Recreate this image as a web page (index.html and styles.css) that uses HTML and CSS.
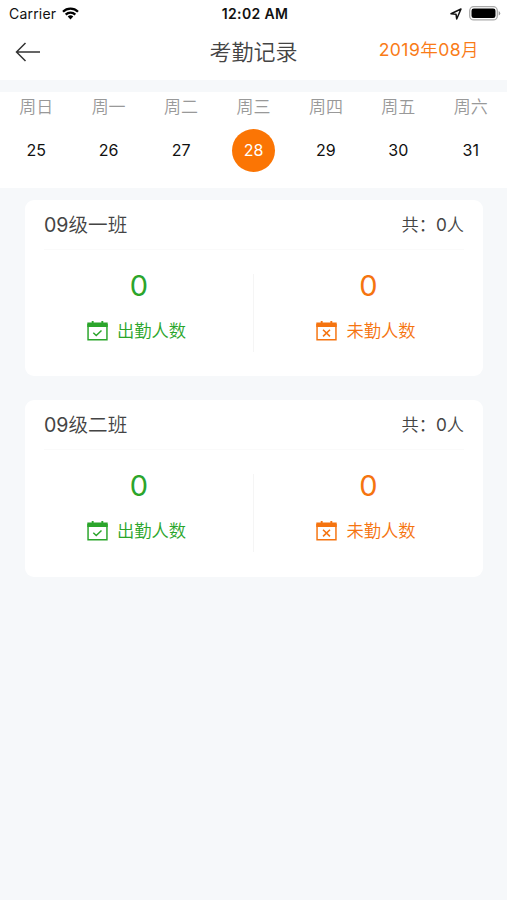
FILE: index.html
```html
<!DOCTYPE html>
<html lang="zh-CN">
<head>
<meta charset="utf-8">
<title>考勤记录</title>
<link rel="stylesheet" href="styles.css">
</head>
<body>
<svg class="defs" width="0" height="0" aria-hidden="true">
  <symbol id="calendar" viewBox="0 0 20 20">
    <path d="M1 3v15.800h18V3" fill="none" stroke="currentColor" stroke-width="1.400"/>
    <path d="M.3 1.500h19.400v4.500H.3zM4.500 0h1.800v3H4.500zM13.700 0h1.800v3h-1.800z" fill="currentColor"/>
  </symbol>
</svg>
<header>
  <div class="status">
    <div class="carrier"><span>Carrier</span>
      <svg width="17" height="13" viewBox="0 0 17 13"><g fill="none" stroke="#000" stroke-width="2.300"><path d="M1 4.700a10.700 10.700 0 0 1 15 0"/><path d="M3.700 7.600a6.800 6.800 0 0 1 9.600 0"/></g><path d="M8.500 12.500 5.700 9.600a4 4 0 0 1 5.600 0z"/></svg>
    </div>
    <div class="clock">12:02 AM</div>
    <div class="indicators">
      <svg width="12" height="12" viewBox="0 0 12 12"><path d="M1 5.700 11 1 6.700 11 6 6.200z" fill="none" stroke="#111" stroke-width="1.500" stroke-linejoin="round"/></svg>
      <svg width="32" height="15" viewBox="0 0 32 15"><rect x=".7" y=".7" width="27.600" height="13.200" rx="4" fill="#fff" stroke="#aaa" stroke-width="1.300"/><rect x="2.500" y="2.500" width="24" height="9.600" rx="2.300"/><path d="M29.700 5v4.600q1.500-.7 1.500-2.300T29.700 5" fill="#999"/></svg>
    </div>
  </div>
  <nav class="nav">
    <svg class="back" width="26" height="20" viewBox="0 0 26 20"><path d="M25 10H1.500M10.500 1l-9 9 9 9" fill="none" stroke="#333" stroke-width="1.500"/></svg>
    <h1>考勤记录</h1>
    <span class="month"><i>2019</i>年<i>08</i>月</span>
  </nav>
</header>
<section class="week">
  <div class="day"><span>周日</span><b>25</b></div>
  <div class="day"><span>周一</span><b>26</b></div>
  <div class="day"><span>周二</span><b>27</b></div>
  <div class="day"><span>周三</span><b class="selected">28</b></div>
  <div class="day"><span>周四</span><b>29</b></div>
  <div class="day"><span>周五</span><b>30</b></div>
  <div class="day"><span>周六</span><b>31</b></div>
</section>
<main>
  <article class="card">
    <div class="head"><h2><i>09</i>级一班</h2><span class="total">共：<i>0</i>人</span></div>
    <div class="stats">
      <div class="stat present"><div class="num">0</div><div class="label"><svg width="21" height="20" viewBox="0 0 20 20" preserveAspectRatio="none"><use href="#calendar"/><path d="m6 11.800 2.800 2.700 5-5" fill="none" stroke="currentColor" stroke-width="1.400"/></svg><span>出勤人数</span></div></div>
      <div class="stat absent"><div class="num">0</div><div class="label"><svg width="21" height="20" viewBox="0 0 20 20" preserveAspectRatio="none"><use href="#calendar"/><path d="m6.700 8.800 6.600 6.600m0-6.600-6.600 6.600" fill="none" stroke="currentColor" stroke-width="1.500"/></svg><span>未勤人数</span></div></div>
    </div>
  </article>
  <article class="card">
    <div class="head"><h2><i>09</i>级二班</h2><span class="total">共：<i>0</i>人</span></div>
    <div class="stats">
      <div class="stat present"><div class="num">0</div><div class="label"><svg width="21" height="20" viewBox="0 0 20 20" preserveAspectRatio="none"><use href="#calendar"/><path d="m6 11.800 2.800 2.700 5-5" fill="none" stroke="currentColor" stroke-width="1.400"/></svg><span>出勤人数</span></div></div>
      <div class="stat absent"><div class="num">0</div><div class="label"><svg width="21" height="20" viewBox="0 0 20 20" preserveAspectRatio="none"><use href="#calendar"/><path d="m6.700 8.800 6.600 6.600m0-6.600-6.600 6.600" fill="none" stroke="currentColor" stroke-width="1.500"/></svg><span>未勤人数</span></div></div>
    </div>
  </article>
</main>
</body>
</html>
```
FILE: styles.css
```css
* { box-sizing: border-box; margin: 0; padding: 0; }
body {
  min-height: 900px;
  background: #f6f8fa;
  color: #444;
  font-family: Inter, "Noto Sans CJK SC", sans-serif;
  font-weight: 350;
}
i { font-style: normal; font-weight: 400; }
svg { display: block; flex: none; }
.defs { position: absolute; }
header { height: 80px; background: #fff; }
.status {
  height: 27px;
  display: grid;
  grid-template-columns: 1fr auto 1fr;
  align-items: center;
  padding: 0 6px 0 9px;
  color: #111;
  font-size: 14px;
  font-weight: 400;
}
.carrier { display: flex; align-items: center; gap: 6px; letter-spacing: .2px; }
.clock { font-weight: 600; letter-spacing: .35px; }
.indicators { display: flex; justify-content: flex-end; align-items: center; gap: 7px; }
.nav {
  height: 50px;
  display: grid;
  grid-template-columns: 1fr auto 1fr;
  align-items: center;
  padding: 0 15px;
}
h1 { font-size: 22px; font-weight: 350; line-height: 30px; }
.month { justify-self: end; margin: 0 13px 4px 0; color: #f97b17; font-size: 17.600px; line-height: 24px; letter-spacing: .4px; }
.week {
  display: grid;
  grid-template-columns: repeat(7, 1fr);
  height: 96px;
  margin-top: 12px;
  background: #fff;
}
.day { display: flex; flex-direction: column; align-items: center; }
.day span { height: 30px; margin-bottom: 7px; color: #999; font-size: 17px; line-height: 30px; }
.day b {
  width: 43px;
  height: 43px;
  border-radius: 50%;
  color: #111;
  font-size: 16px;
  font-weight: 400;
  line-height: 43px;
  text-align: center;
}
.day .selected { background: #fb7504; color: #fff; }
main { display: flex; flex-direction: column; gap: 24px; padding: 12px 24px 0 25px; }
.card { height: 176.400px; padding: 0 19px; border-radius: 9px; background: #fff; }
.head {
  height: 50px;
  display: flex;
  align-items: center;
  justify-content: space-between;
  border-bottom: 1px solid #fafafa;
}
h2 { font-size: 19.600px; font-weight: 350; line-height: 28px; }
.total { font-size: 17.200px; margin-top: -2px; }
.stats { display: grid; grid-template-columns: 1fr 1fr; margin: 24px -19px 0; }
.stat { height: 78px; display: flex; flex-direction: column; align-items: center; }
.present { color: #2ba52b; border-right: 1px solid #f5f5f5; }
.absent { color: #f57410; }
.num { font-size: 29px; font-weight: 400; line-height: 24px; height: 44px; }
.label { display: flex; align-items: center; gap: 9px; margin-right: 5px; font-size: 17.300px; line-height: 26px; }
```
